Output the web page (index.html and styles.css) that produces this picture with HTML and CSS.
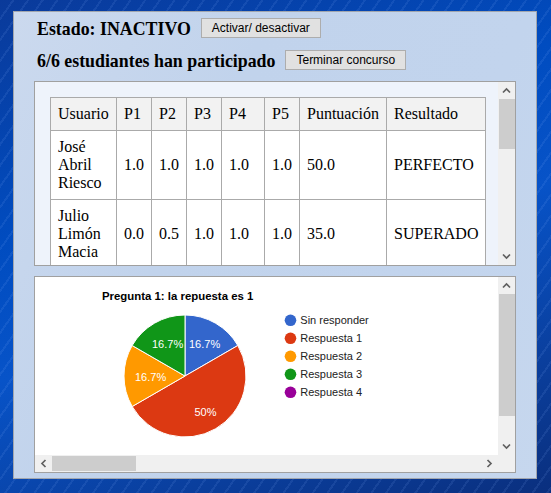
FILE: index.html
```html
<!DOCTYPE html>
<html lang="es">
<head>
<meta charset="utf-8">
<title>Concurso</title>
<link rel="stylesheet" href="styles.css">
</head>
<body>
<div class="panel">
  <div class="status-row">
    <h3 class="status">Estado: INACTIVO</h3>
    <button class="btn">Activar/ desactivar</button>
  </div>
  <div class="status-row">
    <h3 class="status">6/6 estudiantes han participado</h3>
    <button class="btn">Terminar concurso</button>
  </div>

  <div class="box table-box">
    <div class="table-scroll">
      <table class="results">
        <thead>
          <tr>
            <th class="c-user">Usuario</th>
            <th class="c-p">P1</th>
            <th class="c-p">P2</th>
            <th class="c-p">P3</th>
            <th class="c-p4">P4</th>
            <th class="c-p">P5</th>
            <th class="c-score">Puntuación</th>
            <th class="c-result">Resultado</th>
          </tr>
        </thead>
        <tbody>
          <tr>
            <td>José Abril Riesco</td>
            <td>1.0</td><td>1.0</td><td>1.0</td><td>1.0</td><td>1.0</td>
            <td>50.0</td><td>PERFECTO</td>
          </tr>
          <tr>
            <td>Julio Limón Macia</td>
            <td>0.0</td><td>0.5</td><td>1.0</td><td>1.0</td><td>1.0</td>
            <td>35.0</td><td>SUPERADO</td>
          </tr>
        </tbody>
      </table>
    </div>
    <div class="vscroll">
      <div class="sb-btn"><svg width="9" height="9" viewBox="0 0 9 9"><polyline points="1,6.5 4.5,3 8,6.5" class="chev"/></svg></div>
      <div class="sb-track"><div class="thumb-v table-thumb"></div></div>
      <div class="sb-btn"><svg width="9" height="9" viewBox="0 0 9 9"><polyline points="1,2.5 4.5,6 8,2.5" class="chev"/></svg></div>
    </div>
  </div>

  <div class="box chart-box">
    <div class="chart-area">
      <svg class="chart" width="463" height="178" viewBox="0 0 463 178">
        <text x="67" y="23" class="chart-title">Pregunta 1: la repuesta es 1</text>
        <path d="M150,99 L150,38 A61,61 0 0 1 202.83,68.5 Z" fill="#3366cc" class="slice"/>
        <path d="M150,99 L202.83,68.5 A61,61 0 0 1 97.17,129.5 Z" fill="#dc3912" class="slice"/>
        <path d="M150,99 L97.17,129.5 A61,61 0 0 1 97.17,68.5 Z" fill="#ff9900" class="slice"/>
        <path d="M150,99 L97.17,68.5 A61,61 0 0 1 150,38 Z" fill="#109618" class="slice"/>
        <text x="154" y="71" class="slice-label">16.7%</text>
        <text x="117" y="71" class="slice-label">16.7%</text>
        <text x="100" y="104" class="slice-label">16.7%</text>
        <text x="159.5" y="139" class="slice-label">50%</text>

        <circle cx="255.5" cy="43.3" r="5.8" fill="#3366cc"/>
        <text x="265.3" y="47.3" class="legend">Sin responder</text>
        <circle cx="255.5" cy="61.3" r="5.8" fill="#dc3912"/>
        <text x="265.3" y="65.3" class="legend">Respuesta 1</text>
        <circle cx="255.5" cy="79.3" r="5.8" fill="#ff9900"/>
        <text x="265.3" y="83.3" class="legend">Respuesta 2</text>
        <circle cx="255.5" cy="97.3" r="5.8" fill="#109618"/>
        <text x="265.3" y="101.3" class="legend">Respuesta 3</text>
        <circle cx="255.5" cy="115.3" r="5.8" fill="#990099"/>
        <text x="265.3" y="119.3" class="legend">Respuesta 4</text>
      </svg>
    </div>
    <div class="vscroll">
      <div class="sb-btn"><svg width="9" height="9" viewBox="0 0 9 9"><polyline points="1,6.5 4.5,3 8,6.5" class="chev"/></svg></div>
      <div class="sb-track"><div class="thumb-v chart-thumb"></div></div>
      <div class="sb-btn"><svg width="9" height="9" viewBox="0 0 9 9"><polyline points="1,2.5 4.5,6 8,2.5" class="chev"/></svg></div>
    </div>
    <div class="hscroll">
      <div class="sb-btn-h"><svg width="9" height="9" viewBox="0 0 9 9"><polyline points="6.5,1 3,4.5 6.5,8" class="chev"/></svg></div>
      <div class="sb-track-h"><div class="thumb-h"></div></div>
      <div class="sb-btn-h"><svg width="9" height="9" viewBox="0 0 9 9"><polyline points="2.5,1 6,4.5 2.5,8" class="chev"/></svg></div>
    </div>
    <div class="corner"></div>
  </div>
</div>
</body>
</html>
```

FILE: styles.css
```css
html, body {
  margin: 0;
  padding: 0;
}

body {
  width: 551px;
  height: 493px;
  overflow: hidden;
  font-family: "Liberation Serif", "Times New Roman", serif;
  color: #000;
  background:
    repeating-linear-gradient(125deg, rgba(255,255,255,0) 0px, rgba(255,255,255,0) 10px, rgba(140,180,255,0.11) 10px, rgba(140,180,255,0.11) 12px),
    linear-gradient(160deg, #0a3a9a 0%, #004cc0 35%, #0753c8 55%, #0a3f9e 80%, #0a2f7e 100%);
  padding-top: 11px;
  box-sizing: border-box;
}

.panel {
  box-sizing: border-box;
  width: 524px;
  height: 468px;
  margin-left: 13px;
  border: 1px solid #a2a6ad;
  background: linear-gradient(115deg, #cbd9ee 0%, #c1d3ec 35%, #c2d4ed 70%, #c6d7ee 100%);
  padding-left: 20px;
}

.status-row {
  display: flex;
  align-items: center;
  gap: 10px;
  height: 32px;
  padding-left: 3px;
}

.status {
  margin: 0;
  padding-top: 2px;
  font-size: 17.85px;
  font-weight: bold;
  white-space: nowrap;
}

.btn {
  height: 20px;
  padding: 0 10px;
  margin: 0;
  border: 1px solid #adadad;
  background: #e1e1e1;
  color: #000;
  font-family: "Liberation Sans", Arial, sans-serif;
  font-size: 12px;
  line-height: 16px;
}

.box {
  box-sizing: border-box;
  width: 482px;
  border: 1px solid #a0a0a0;
}

.table-box {
  display: flex;
  height: 185px;
  margin-top: 5px;
  background: #eef3fb;
}

.table-scroll {
  flex: 1;
  overflow: hidden;
  padding: 15px 0 0 15px;
}

.results {
  table-layout: fixed;
  width: 436px;
  border-collapse: separate;
  border-spacing: 0;
  border-top: 1px solid #aaaaaa;
  border-left: 1px solid #aaaaaa;
  background: #fff;
  font-size: 16px;
  line-height: 18px;
}

.results th,
.results td {
  box-sizing: border-box;
  border-right: 1px solid #aaaaaa;
  border-bottom: 1px solid #aaaaaa;
  padding: 7px 7px;
  text-align: left;
  font-weight: normal;
  vertical-align: middle;
}

.results th {
  background: #f2f2f2;
}

.c-user { width: 66px; }
.c-p { width: 35px; }
.c-p4 { width: 43px; }
.c-score { width: 87px; }
.c-result { width: 99px; }

.vscroll {
  width: 17px;
  flex: none;
  display: flex;
  flex-direction: column;
  background: #f0f0f0;
}

.sb-btn {
  height: 17px;
  flex: none;
  display: flex;
  align-items: center;
  justify-content: center;
}

.sb-track {
  flex: 1;
}

.thumb-v {
  margin-left: 1px;
  width: 16px;
  background: #cdcdcd;
}

.table-thumb {
  height: 50px;
}

.chart-thumb {
  height: 122px;
}

.chev {
  fill: none;
  stroke: #606060;
  stroke-width: 1.7;
}

.chart-box {
  display: grid;
  grid-template-columns: 463px 17px;
  grid-template-rows: 178px 17px;
  height: 197px;
  margin-top: 10px;
  background: #fff;
}

.chart-area {
  overflow: hidden;
}

.chart {
  display: block;
}

.chart-title {
  font-family: "Liberation Sans", Arial, sans-serif;
  font-size: 11.4px;
  font-weight: bold;
  fill: #000;
}

.slice {
  stroke: #fff;
  stroke-width: 1;
}

.slice-label {
  font-family: "Liberation Sans", Arial, sans-serif;
  font-size: 11px;
  fill: #fff;
}

.legend {
  font-family: "Liberation Sans", Arial, sans-serif;
  font-size: 11px;
  fill: #222;
}

.hscroll {
  display: flex;
  background: #f0f0f0;
}

.sb-btn-h {
  width: 17px;
  flex: none;
  display: flex;
  align-items: center;
  justify-content: center;
}

.sb-track-h {
  flex: 1;
  display: flex;
  align-items: center;
}

.thumb-h {
  width: 84px;
  height: 15px;
  background: #cdcdcd;
}

.corner {
  background: #f0f0f0;
}
```
